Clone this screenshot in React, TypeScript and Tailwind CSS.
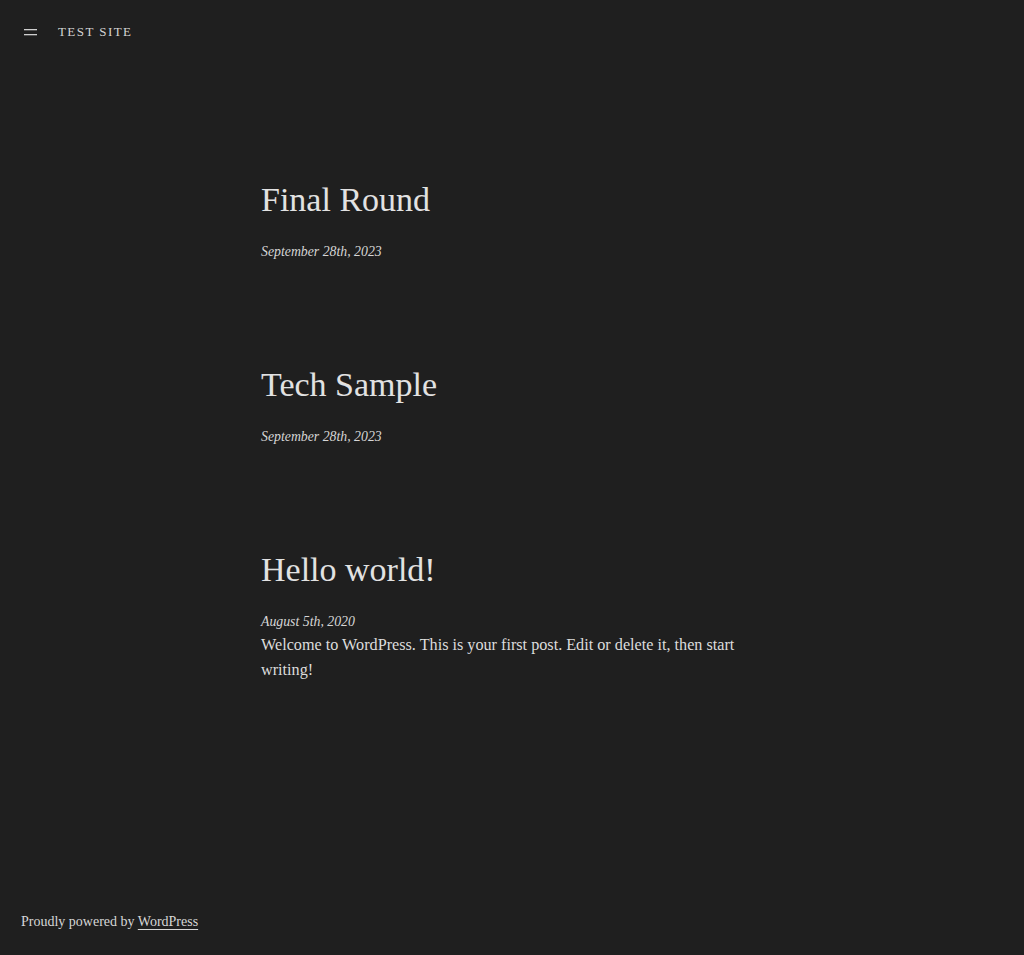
import React from "react";

const posts = [
  { title: "Final Round", date: "September 28th, 2023" },
  { title: "Tech Sample", date: "September 28th, 2023" },
  {
    title: "Hello world!",
    date: "August 5th, 2020",
    excerpt:
      "Welcome to WordPress. This is your first post. Edit or delete it, then start writing!",
  },
];

export default function App() {
  return (
    <div
      className="min-h-[955px] bg-[#1f1f1f] text-[#dcdcdc] flex flex-col"
      style={{ fontFamily: '"Liberation Serif", "DejaVu Serif", serif' }}
    >
      <header className="flex items-center h-[63px] pl-[24px] gap-[21px]">
        <svg width="13" height="8" viewBox="0 0 13 8" className="text-[#cfcfcf]">
          <rect x="0" y="1" width="13" height="1.3" fill="currentColor" />
          <rect x="0" y="6" width="13" height="1.3" fill="currentColor" />
        </svg>
        <span className="text-[13px] tracking-[0.11em] uppercase text-[#d4d4d4]">
          Test Site
        </span>
      </header>

      <main className="flex-1 w-[502px] mx-auto pt-[116px]">
        {posts.map((p, i) => (
          <article key={i} className="mb-[102px]">
            <h2 className="text-[34px] leading-[42px] font-light text-[#e2e2e2]">
              {p.title}
            </h2>
            <div className="mt-[21px] text-[13.8px] leading-[20px] italic text-[#d6d6d6]">
              {p.date}
            </div>
            {p.excerpt && (
              <p className="mt-[1px] text-[16.2px] leading-[25px] text-[#dcdcdc]">
                {p.excerpt}
              </p>
            )}
          </article>
        ))}
      </main>

      <footer className="pl-[21px] pb-[23px] text-[14px] text-[#d6d6d6]">
        Proudly powered by{" "}
        <a className="underline decoration-1 underline-offset-[3px]">WordPress</a>
      </footer>
    </div>
  );
}
